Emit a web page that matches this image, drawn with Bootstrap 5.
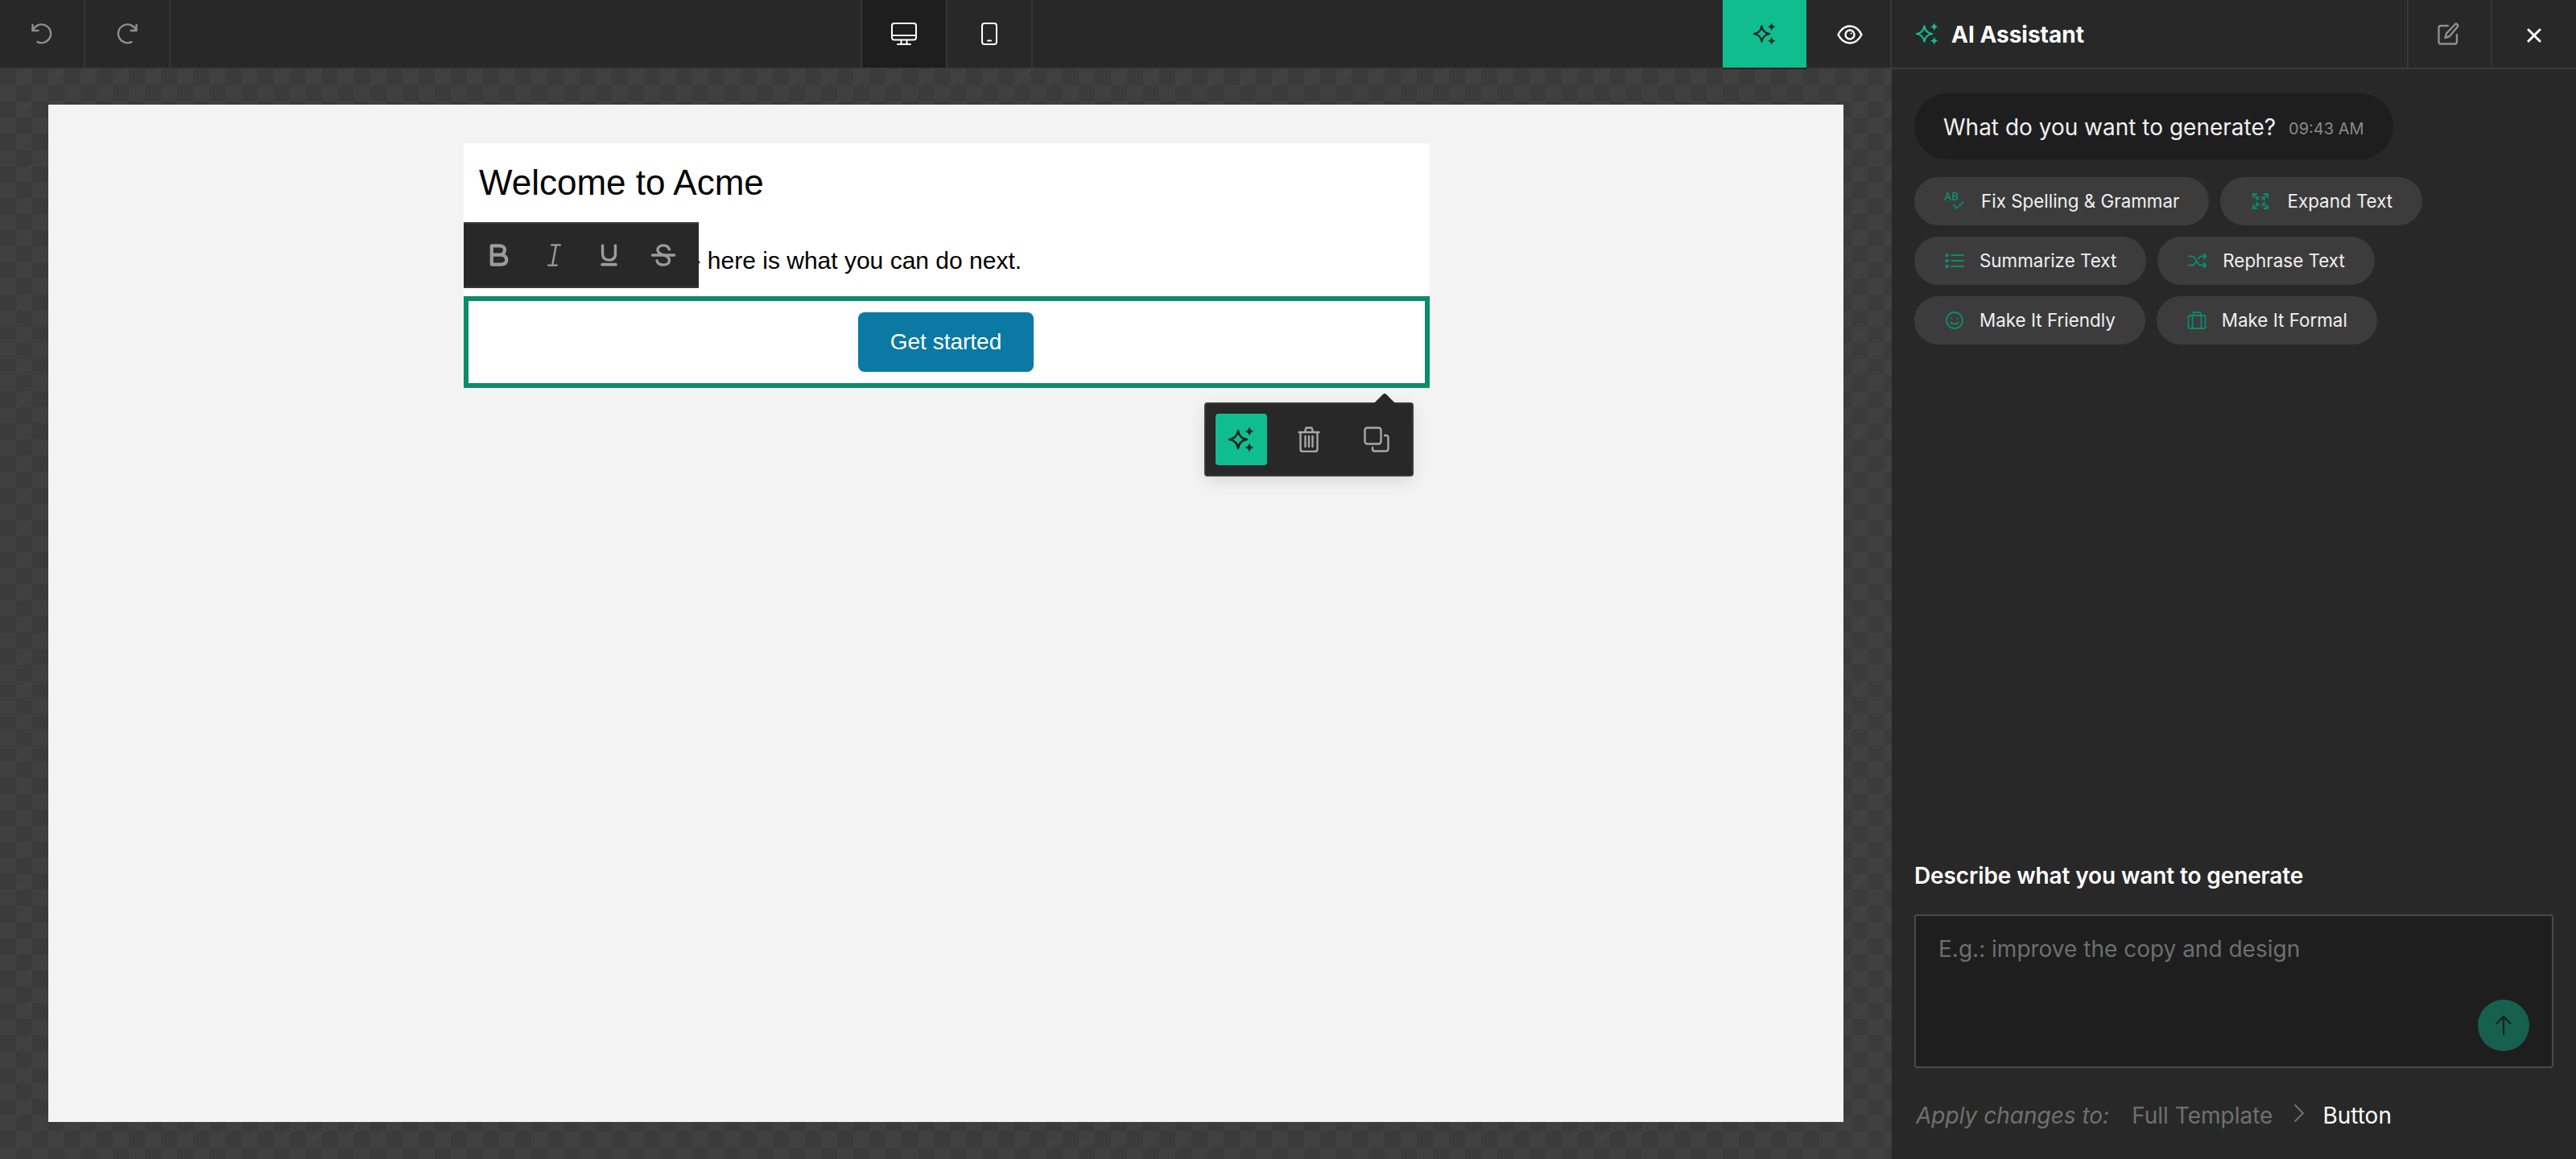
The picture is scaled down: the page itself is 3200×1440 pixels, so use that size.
<!DOCTYPE html>
<html lang="en">
<head>
    <meta charset="UTF-8">
    <meta name="viewport" content="width=device-width, initial-scale=1.0">
    <title>AI Assistant</title>
    <link href="https://cdn.jsdelivr.net/npm/bootstrap@5.3.0/dist/css/bootstrap.min.css" rel="stylesheet">
    <style>
body {
    background: #282828;
    font-family: "Inter", "Liberation Sans", sans-serif;
    overflow: hidden;
}

/* Top bar */
.top-bar {
    height: 86px;
    background: #282828;
    border-bottom: 2px solid #3a3a3a;
}
.bar-cell {
    --bs-btn-hover-bg: transparent;
    --bs-btn-hover-border-color: #363636;
    width: 106px;
    height: 84px;
    padding: 0;
    border: 0;
    border-radius: 0;
    border-right: 2px solid #363636;
    background: transparent;
}
.bar-cell.first-cell { border-left: 2px solid #363636; width: 108px; }
.bar-cell.current { background: #1e1e1e; }
.bar-cell.ai-on { width: 104px; background: #10bd8e; border-right: 0; box-shadow: 0 2px 0 #222; }
.bar-cell.eye-cell { padding-left: 4px; }
.ic-grey { color: #8f8f8f; --bs-btn-hover-color: #8f8f8f; }
.ic-white { color: #fff; --bs-btn-hover-color: #fff; }
.ic-dark { color: #222; --bs-btn-hover-color: #222; }
.ic-green { color: #10bd8e; }
.ic-chip { color: #0b8c6c; }

/* Stage */
.stage {
    padding: 44px 60px 46px 60px;
    background-color: #3b3b3b;
    background-image: url("data:image/svg+xml,%3Csvg xmlns='http://www.w3.org/2000/svg' width='40' height='40'%3E%3Crect x='20' width='20' height='20' fill='%23404040'/%3E%3Crect y='20' width='20' height='20' fill='%23404040'/%3E%3Cpath d='M20 20L40 0' stroke='%23474747' stroke-width='1'/%3E%3C/svg%3E");
    background-position: 0 0;
}
.page-canvas {
    background: #f3f3f3;
    padding: 48px 0 0 516px;
}
.email-box {
    width: 1200px;
    font-family: "Liberation Sans", Arial, sans-serif;
    color: #000;
}
.email-top {
    background: #fff;
    height: 190px;
    padding: 21px 18px 0;
}
.email-title {
    font-family: "Liberation Sans", Arial, sans-serif;
    font-size: 44px;
    font-weight: 400;
    line-height: 55px;
    margin: 0 0 47px 1px;
}
.email-text {
    font-size: 30px;
    line-height: 45px;
    margin: 0;
}
.email-cta {
    background: #fff;
    border: 6px solid #0b8c6c;
    padding: 14px 2px 14px 0;
    height: 114px;
}
.cta-btn {
    width: 218px;
    height: 74px;
    padding: 0;
    background: #0a79a3;
    border: 0;
    border-radius: 8px;
    color: #fff;
    font-family: "Liberation Sans", Arial, sans-serif;
    font-size: 28px;
}
.format-bar {
    position: absolute;
    left: 0;
    top: 98px;
    width: 292px;
    height: 82px;
    background: #282828;
    border-top: 2px solid #3a3a3a;
    border-bottom: 2px solid #3a3a3a;
    color: #9c9c9c;
    padding-left: 10px;
}
.format-item {
    width: 68px;
    text-align: center;
    line-height: 0;
}
.block-bar {
    position: absolute;
    top: 322px;
    right: 20px;
    width: 260px;
    height: 92px;
    background: #282828;
    border: 2px solid #3a3a3a;
    border-radius: 4px;
    box-shadow: 0 6px 20px rgba(0, 0, 0, .1);
    padding: 12px 0 0 12px;
    gap: 20px;
}
.block-bar::before {
    content: "";
    position: absolute;
    top: -10px;
    right: 24px;
    width: 20px;
    height: 20px;
    background: #282828;
    border-radius: 3px 0 0 0;
    transform: rotate(45deg);
}
.block-btn {
    width: 64px;
    height: 64px;
    border-radius: 4px;
}
.block-btn.is-on { background: #10bd8e; }
.block-ico { color: #a8a8a8; }

/* Assistant panel */
.ai-panel {
    width: 850px;
    background: #282828;
}
.ai-head {
    height: 86px;
    border-bottom: 2px solid #3a3a3a;
}
.ai-head-title {
    font-size: 28px;
    font-weight: 700;
    color: #fff;
    padding-left: 30px;
    gap: 16px;
}
.ai-head-title span { padding-top: 2px; }
.ai-head .bar-cell { border-right: 0; border-left: 2px solid #363636; }
.ai-head .edit-cell { width: 104px; padding-right: 2px; }
.ai-body { padding: 30px 28px 0; }
.ask-bubble {
    height: 82px;
    background: #1e1e1e;
    border-radius: 41px;
    padding: 2px 36px 0;
    color: #f0f0f0;
    font-size: 28px;
}
.ask-time {
    font-size: 20px;
    color: #8a8a8a;
    margin-left: 16px;
    padding-top: 4px;
}
.chip-wrap {
    margin-top: 22px;
    gap: 14px;
}
.chip-row { gap: 14px; }
.chip-btn {
    height: 60px;
    padding: 0 37px 0 38px;
    gap: 21px;
    background: #3c3c3c;
    border: 0;
    color: #f0f0f0;
    font-size: 22.4px;
}
.chip-row.tight .chip-btn { gap: 19px; }
.chip-ico {
    width: 24px;
    flex-shrink: 0;
}
.prompt-label {
    color: #fff;
    font-size: 28px;
    font-weight: 600;
    letter-spacing: -.12px;
    line-height: 40px;
    margin-bottom: 28px;
}
.prompt-box {
    height: 191px;
    background: #1e1e1e;
    border: 2px solid #4a4a4a;
    border-radius: 4px;
    padding: 20px 28px;
    font-size: 28px;
    color: #fff;
    resize: none;
}
.prompt-box::placeholder { color: #6e6e6e; opacity: 1; }
.prompt-box:focus { background: #1e1e1e; border-color: #4a4a4a; box-shadow: none; color: #fff; }
.send-btn {
    position: absolute;
    right: 30px;
    bottom: 21px;
    width: 64px;
    height: 64px;
    padding: 0;
    border: 0;
    background: #166050;
    color: #1e1e1e;
}
.apply-row {
    height: 50px;
    margin-top: 34px;
    margin-bottom: 29px;
    font-size: 28px;
    color: #707070;
}
.apply-label { font-style: italic; margin-left: 2px; margin-right: 28px; }
.apply-chev { margin: -6px 22px 0 26px; }
.apply-now { color: #fff; }
    </style>
</head>
<body>
<svg width="0" height="0" class="position-absolute">
    <symbol id="i-spark" viewBox="0 0 32 32">
        <path d="M12 5C13 11.500 16 15 23 16C16 17 13 20.500 12 27C11 20.500 8 17 1 16C8 15 11 11.500 12 5Z" fill="none" stroke="currentColor" stroke-width="2.500" stroke-linejoin="round"/>
        <path d="M26 0C26.600 3.400 28 5.400 32 6C28 6.600 26.600 8.600 26 12C25.400 8.600 24 6.600 20 6C24 5.400 25.400 3.400 26 0Z" fill="currentColor"/>
        <path d="M26 20C26.600 23.400 28 25.400 32 26C28 26.600 26.600 28.600 26 32C25.400 28.600 24 26.600 20 26C24 25.400 25.400 23.400 26 20Z" fill="currentColor"/>
    </symbol>
</svg>
<div class="d-flex vh-100">
    <div class="d-flex flex-column flex-grow-1" style="min-width:0">
        <div class="top-bar d-flex justify-content-between">
            <div class="d-flex">
                <button type="button" class="btn bar-cell ic-grey" aria-label="Undo"><svg width="26" height="26" viewBox="0 0 26 26" fill="none" stroke="currentColor" stroke-width="2.400" stroke-linecap="round" stroke-linejoin="round"><path d="M1.500 2V9H8.500"/><path d="M1.800 8.800A11.500 11.500 0 1 1 7.500 23.200"/></svg></button>
                <button type="button" class="btn bar-cell ic-grey" aria-label="Redo"><svg width="26" height="26" viewBox="0 0 26 26" fill="none" stroke="currentColor" stroke-width="2.400" stroke-linecap="round" stroke-linejoin="round"><path d="M24.500 2V9H17.500"/><path d="M24.200 8.800A11.500 11.500 0 1 0 18.500 23.200"/></svg></button>
            </div>
            <div class="d-flex">
                <button type="button" class="btn bar-cell first-cell current ic-white" aria-label="Desktop"><svg width="32" height="28" viewBox="0 0 32 28" fill="none" stroke="currentColor" stroke-width="2" stroke-linecap="round" stroke-linejoin="round"><rect x="1" y="1" width="30" height="20.500" rx="3"/><path d="M1 16H31M12.500 21.500V27M19.500 21.500V27M8 27H24"/></svg></button>
                <button type="button" class="btn bar-cell ic-white" aria-label="Mobile"><svg width="20" height="28" viewBox="0 0 20 28" fill="none" stroke="currentColor" stroke-width="2" stroke-linecap="round"><rect x="1" y="1" width="18" height="26" rx="3"/><path d="M8 22.500H12"/></svg></button>
            </div>
            <div class="d-flex">
                <button type="button" class="btn bar-cell ai-on ic-dark" aria-label="AI"><svg width="28" height="28"><use href="#i-spark"/></svg></button>
                <button type="button" class="btn bar-cell eye-cell ic-white" aria-label="Preview"><svg width="32" height="24" viewBox="0 0 32 24" fill="none" stroke="currentColor" stroke-width="2.400"><path d="M1.500 12C5 5 10 1.500 16 1.500S27 5 30.500 12C27 19 22 22.500 16 22.500S5 19 1.500 12Z" stroke-linejoin="round"/><circle cx="16" cy="12" r="5.500"/><circle cx="17.500" cy="10.500" r="1" fill="currentColor" stroke="none"/></svg></button>
            </div>
        </div>
        <div class="stage flex-grow-1 d-flex flex-column">
            <div class="page-canvas flex-grow-1">
                <div class="email-box position-relative">
                    <div class="email-top">
                        <h1 class="email-title">Welcome to Acme</h1>
                        <p class="email-text ps-1">Glad you're with us - here is what you can do next.</p>
                    </div>
                    <div class="email-cta text-center">
                        <button type="button" class="btn cta-btn">Get started</button>
                    </div>
                    <div class="format-bar d-flex align-items-center">
                        <span class="format-item"><svg width="24" height="28" viewBox="0 0 26 30" fill="none" stroke="currentColor" stroke-width="4.600" stroke-linejoin="round"><path d="M3 2.500H14C18 2.500 20.500 4.500 20.500 8S18 14.500 14 14.500H3ZM3 14.500H15C20 14.500 23 17.500 23 21.500S20 27.500 15 27.500H3Z"/></svg></span>
                        <span class="format-item"><svg width="17" height="28" viewBox="0 0 18 30" fill="none" stroke="currentColor" stroke-width="2.600" stroke-linecap="round"><path d="M5.500 1.500H17M1 28.500H12.500M11.500 1.500L6.500 28.500"/></svg></span>
                        <span class="format-item"><svg width="21" height="28" viewBox="0 0 22 30" fill="none" stroke="currentColor" stroke-width="3.600" stroke-linecap="round"><path d="M2.500 2V13.500C2.500 19 5.500 21.500 11 21.500S19.500 19 19.500 13.500V2"/><path d="M2 27.500H20" stroke-width="4"/></svg></span>
                        <span class="format-item"><svg width="32" height="28" viewBox="0 0 32 30" fill="none" stroke="currentColor" stroke-width="3.600" stroke-linecap="round"><path d="M24 7.500C23 4 20 2 16 2C11.500 2 8.500 4.500 8.500 8C8.500 11.500 11 13 15.500 14.500C21 16 24 18 24 22C24 26 20.500 28 16 28C11.500 28 8.500 26.500 7.500 22.500"/><path d="M1.500 15H30.500"/></svg></span>
                    </div>
                    <div class="block-bar d-flex">
                        <span class="block-btn is-on ic-dark d-flex align-items-center justify-content-center"><svg width="32" height="32"><use href="#i-spark"/></svg></span>
                        <span class="block-btn block-ico d-flex align-items-center justify-content-center"><svg width="28" height="32" viewBox="0 0 28 32" fill="none" stroke="currentColor" stroke-width="2.400" stroke-linecap="round" stroke-linejoin="round"><path d="M1.500 7H26.500M9 6.500L10.500 1.500H17.500L19 6.500M3.500 7V28C3.500 29.800 4.700 31 6.500 31H21.500C23.300 31 24.500 29.800 24.500 28V7M9.500 12V25M14 12V25M18.500 12V25"/></svg></span>
                        <span class="block-btn block-ico d-flex align-items-center justify-content-center"><svg width="32" height="32" viewBox="0 0 32 32" fill="none" stroke="currentColor" stroke-width="2.400" stroke-linecap="round" stroke-linejoin="round"><rect x="1.500" y="1.500" width="20" height="20" rx="3"/><path d="M26 11H28C29.700 11 30.500 12 30.500 13.500V27.500C30.500 29.500 29.500 30.500 27.500 30.500H13.500C12 30.500 11 29.500 11 28V26"/></svg></span>
                    </div>
                </div>
            </div>
        </div>
    </div>

    <div class="ai-panel d-flex flex-column flex-shrink-0">
        <div class="ai-head d-flex">
            <div class="ai-head-title d-flex align-items-center flex-grow-1">
                <svg class="ic-green" width="28" height="28"><use href="#i-spark"/></svg>
                <span>AI Assistant</span>
            </div>
            <button type="button" class="btn bar-cell edit-cell ic-grey" aria-label="New"><svg width="28" height="28" viewBox="0 0 28 28" fill="none" stroke="currentColor" stroke-width="2.400" stroke-linecap="round" stroke-linejoin="round"><path d="M13 4H4C2.500 4 1.500 5 1.500 6.500V24C1.500 25.500 2.500 26.500 4 26.500H21.500C23 26.500 24 25.500 24 24V15"/><path d="M22 2C23.500 .8 26 3 25 5L15 17L9.500 19L11 13.500Z"/></svg></button>
            <button type="button" class="btn bar-cell ic-white" aria-label="Close"><svg width="18" height="18" viewBox="0 0 18 18" fill="none" stroke="currentColor" stroke-width="3" stroke-linecap="round"><path d="M2 2L16 16M16 2L2 16"/></svg></button>
        </div>
        <div class="ai-body d-flex flex-column flex-grow-1">
            <div class="ask-bubble d-inline-flex align-items-center align-self-start">
                <span>What do you want to generate?</span><span class="ask-time">09:43 AM</span>
            </div>
            <div class="chip-wrap d-flex flex-column">
                <div class="chip-row d-flex">
                    <button type="button" class="btn chip-btn rounded-pill d-flex align-items-center"><svg class="chip-ico ic-chip" height="22" viewBox="0 0 26 22" overflow="visible"><text x="-1" y="10" font-family="Inter, sans-serif" font-size="14" font-weight="600" fill="currentColor">AB</text><path d="M11 15.500L16 20.500L25 11.500" fill="none" stroke="currentColor" stroke-width="1.800"/></svg>Fix Spelling &amp; Grammar</button>
                    <button type="button" class="btn chip-btn rounded-pill d-flex align-items-center"><svg class="chip-ico ic-chip" height="20" viewBox="0 0 20 20" fill="none" stroke="currentColor" stroke-width="2"><path d="M1 6V1H6M14 1H19V6M19 14V19H14M6 19H1V14"/><path d="M2 2L8 8M18 2L12 8M18 18L12 12M2 18L8 12M5 9V5H9M11 5H15V9M15 11V15H11M9 15H5V11" stroke-width="1.600"/></svg>Expand Text</button>
                </div>
                <div class="chip-row tight d-flex">
                    <button type="button" class="btn chip-btn rounded-pill d-flex align-items-center"><svg class="chip-ico ic-chip" height="18" viewBox="0 0 23 18" fill="currentColor"><rect y="0" width="4" height="4"/><rect y="7" width="4" height="4"/><rect y="14" width="4" height="4"/><rect x="7" y="1" width="16" height="2"/><rect x="7" y="8" width="16" height="2"/><rect x="7" y="15" width="16" height="2"/></svg>Summarize Text</button>
                    <button type="button" class="btn chip-btn rounded-pill d-flex align-items-center"><svg class="chip-ico ic-chip" height="20" viewBox="0 0 23 20" fill="none" stroke="currentColor" stroke-width="1.800"><path d="M0 4.500H5C9 4.500 11 15.500 15 15.500H22M0 15.500H5C7 15.500 8.500 13 9.500 11M12 8C13 6 14 4.500 15.500 4.500H22M18.500 1L22 4.500L18.500 8M18.500 12L22 15.500L18.500 19"/></svg>Rephrase Text</button>
                </div>
                <div class="chip-row tight d-flex">
                    <button type="button" class="btn chip-btn rounded-pill d-flex align-items-center"><svg class="chip-ico ic-chip" height="22" viewBox="0 0 23 22" fill="none" stroke="currentColor" stroke-width="1.800"><circle cx="11.500" cy="11" r="10"/><path d="M6.500 13C8 16.500 15 16.500 16.500 13"/><circle cx="8" cy="8.500" r="1" fill="currentColor" stroke="none"/><circle cx="15" cy="8.500" r="1" fill="currentColor" stroke="none"/></svg>Make It Friendly</button>
                    <button type="button" class="btn chip-btn rounded-pill d-flex align-items-center"><svg class="chip-ico ic-chip" height="22" viewBox="0 0 23 22" fill="none" stroke="currentColor" stroke-width="1.800"><rect x="1" y="5" width="21" height="16" rx="2"/><path d="M7 5V2C7 1.500 7.500 1 8 1H15C15.500 1 16 1.500 16 2V5M6 5V21M17 5V21"/></svg>Make It Formal</button>
                </div>
            </div>

            <div class="mt-auto">
                <label for="promptInput" class="form-label prompt-label d-block">Describe what you want to generate</label>
                <div class="position-relative" style="width:794px">
                    <textarea id="promptInput" class="form-control prompt-box" placeholder="E.g.: improve the copy and design"></textarea>
                    <button type="button" class="btn send-btn rounded-circle d-flex align-items-center justify-content-center" aria-label="Send"><svg width="22" height="26" viewBox="0 0 22 26" fill="none" stroke="currentColor" stroke-width="2.200" stroke-linecap="round" stroke-linejoin="round"><path d="M11 24V2M2.500 10.500L11 2L19.500 10.500"/></svg></button>
                </div>
                <div class="apply-row d-flex align-items-center">
                    <span class="apply-label">Apply changes to:</span>
                    <span>Full Template</span>
                    <svg class="apply-chev" width="14" height="24" viewBox="0 0 14 24" fill="none" stroke="#707070" stroke-width="2"><path d="M1.500 1.500L12 12L1.500 22.500"/></svg>
                    <span class="apply-now">Button</span>
                </div>
            </div>
        </div>
    </div>
</div>
<script src="https://cdn.jsdelivr.net/npm/bootstrap@5.3.0/dist/js/bootstrap.bundle.min.js"></script>
</body>
</html>
